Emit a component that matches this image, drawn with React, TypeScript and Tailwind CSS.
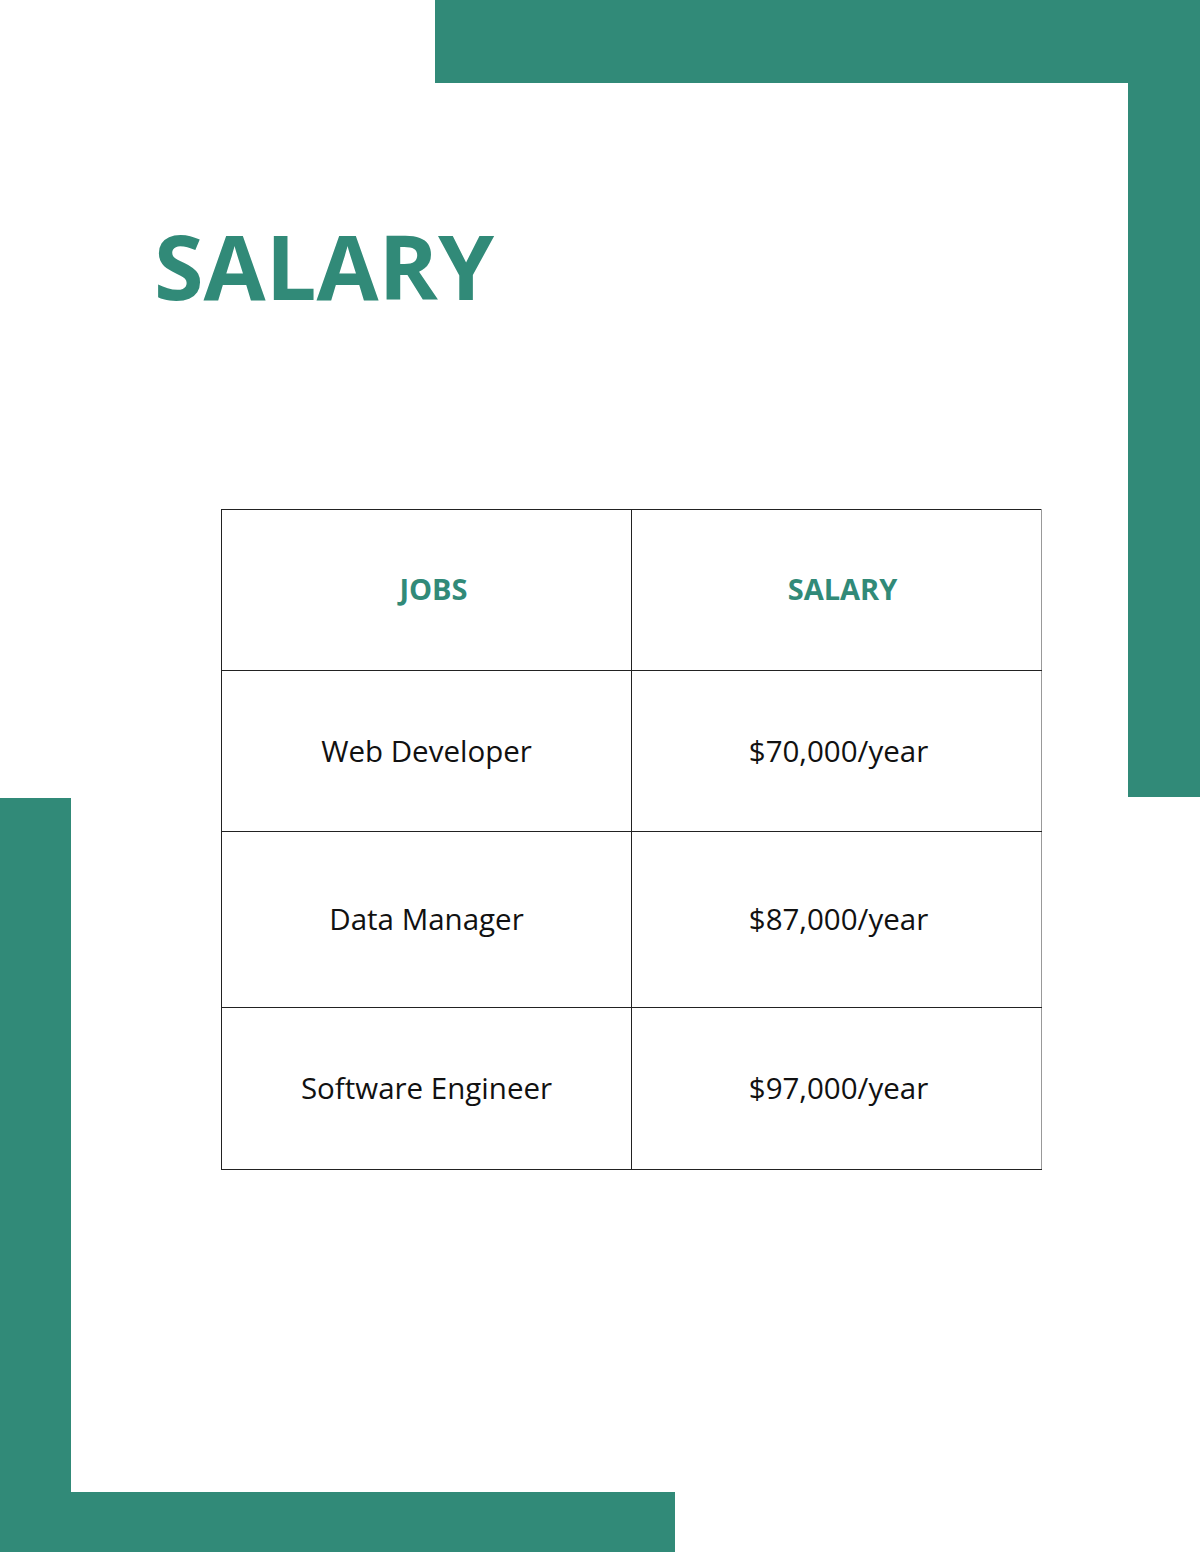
const ROWS = [
  { job: 'Web Developer', salary: '$70,000/year', h: 'h-[161px]' },
  { job: 'Data Manager', salary: '$87,000/year', h: 'h-[176px]' },
  { job: 'Software Engineer', salary: '$97,000/year', h: 'h-[162px]' },
]

export default function App() {
  return (
    <div className="grid w-[1200px] h-[1552px] grid-cols-[71px_1fr_72px] grid-rows-[83px_714px_1px_694px_60px] bg-white font-['Open_Sans',sans-serif]">
      {/* frame bars */}
      <div className="col-start-2 row-start-1 ml-[364px] bg-[#318a78]" />
      <div className="col-start-3 row-start-1 row-span-2 bg-[#318a78]" />
      <div className="col-start-1 row-start-4 row-span-2 bg-[#318a78]" />
      <div className="col-start-2 row-start-5 w-[604px] bg-[#318a78]" />

      {/* content */}
      <div className="col-start-2 row-start-2 row-span-3 flex flex-col">
        <h1 className="mt-[137px] pl-[83px] text-[90px] leading-none font-bold text-[#318a78]">SALARY</h1>

        <table className="mt-[199px] ml-[150px] w-[821px] border-collapse table-fixed">
          <thead>
            <tr className="h-[161px]">
              <th className="w-[410px] border border-[#222] pl-[14px] pb-[3px] text-[29px] font-bold text-[#318a78]">JOBS</th>
              <th className="border border-[#222] border-r-[#999] pl-[12px] pb-[3px] text-[29px] font-bold text-[#318a78]">SALARY</th>
            </tr>
          </thead>
          <tbody>
            {ROWS.map((r) => (
              <tr key={r.job} className={r.h}>
                <td className="border border-[#222] text-center text-[29.5px] text-[#111]">{r.job}</td>
                <td className="border border-[#222] border-r-[#999] pl-[4px] text-center text-[29.5px] text-[#111]">{r.salary}</td>
              </tr>
            ))}
          </tbody>
        </table>
      </div>
    </div>
  )
}
